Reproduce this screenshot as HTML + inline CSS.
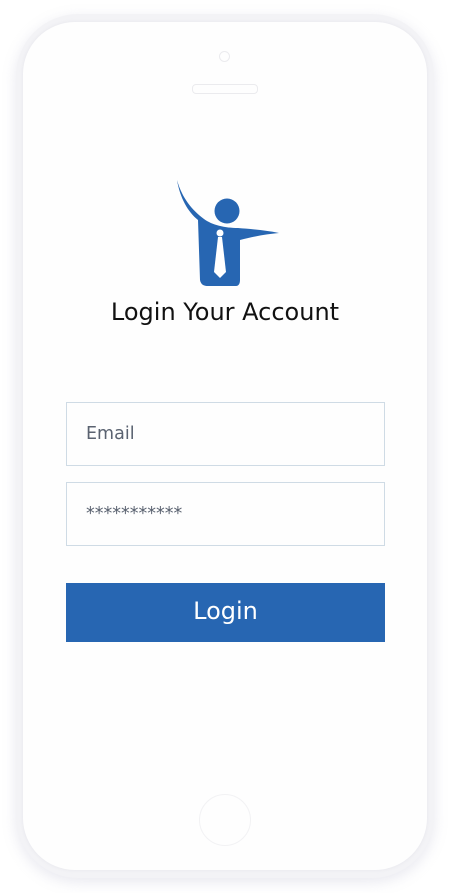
<!DOCTYPE html>
<html><head><meta charset="utf-8"><style>
html,body{margin:0;padding:0;background:#fff;width:450px;height:893px;overflow:hidden;font-family:"DejaVu Sans","Liberation Sans",sans-serif}
.phone{position:absolute;left:16px;top:14px;width:418px;height:864px;border-radius:62px;background:#f3f3f6;box-shadow:0 4px 14px rgba(205,205,220,.45)}
.screen{position:absolute;left:23px;top:22px;width:404px;height:848px;border-radius:52px;background:#fefefe;box-shadow:0 0 3px rgba(225,225,232,.8)}
.cam{position:absolute;left:219px;top:51px;width:11px;height:11px;border-radius:50%;border:1px solid #ebebee;box-sizing:border-box}
.spk{position:absolute;left:192px;top:84px;width:66px;height:10px;border-radius:4px;border:1px solid #ebebee;box-sizing:border-box}
.home{position:absolute;left:199px;top:794px;width:52px;height:52px;border-radius:50%;border:1px solid #f2f2f4;box-sizing:border-box}
.title{position:absolute;left:0;width:450px;top:298px;text-align:center;font-size:24px;color:#111}
.inp{position:absolute;left:66px;width:319px;height:64px;border:1px solid #cfdbe5;box-sizing:border-box;font-size:17.5px;color:#5a6270;padding-left:19px;line-height:62px}
.btn{position:absolute;left:66px;top:583px;width:319px;height:59px;background:#2766b2;color:#fff;font-size:24px;text-align:center;line-height:57px}
</style></head><body>
<div class="phone"></div>
<div class="screen"></div>
<div class="cam"></div><div class="spk"></div><div class="home"></div>
<svg style="position:absolute;left:0;top:0" width="450" height="893">
<circle cx="227" cy="211" r="12.5" fill="#2766b2"/>
<path d="M177 180 C180 198 188 212 198 220 L200 280 C201 285 204 286 208 286 L236 286 C239 286 240 283 240 280 L240 240 C255 236 268 234 279 233 C265 230 250 229 238 228 C225 228 212 225 204 219 C192 210 182 198 177 180 Z" fill="#2766b2"/>
<circle cx="220" cy="233" r="3.5" fill="#fff"/>
<path d="M218 237 L222 237 L226 272 L220 278 L214 272 Z" fill="#fff"/>
</svg>
<div class="title">Login Your Account</div>
<div class="inp" style="top:402px">Email</div>
<div class="inp" style="top:482px">***********</div>
<div class="btn">Login</div>
</body></html>
